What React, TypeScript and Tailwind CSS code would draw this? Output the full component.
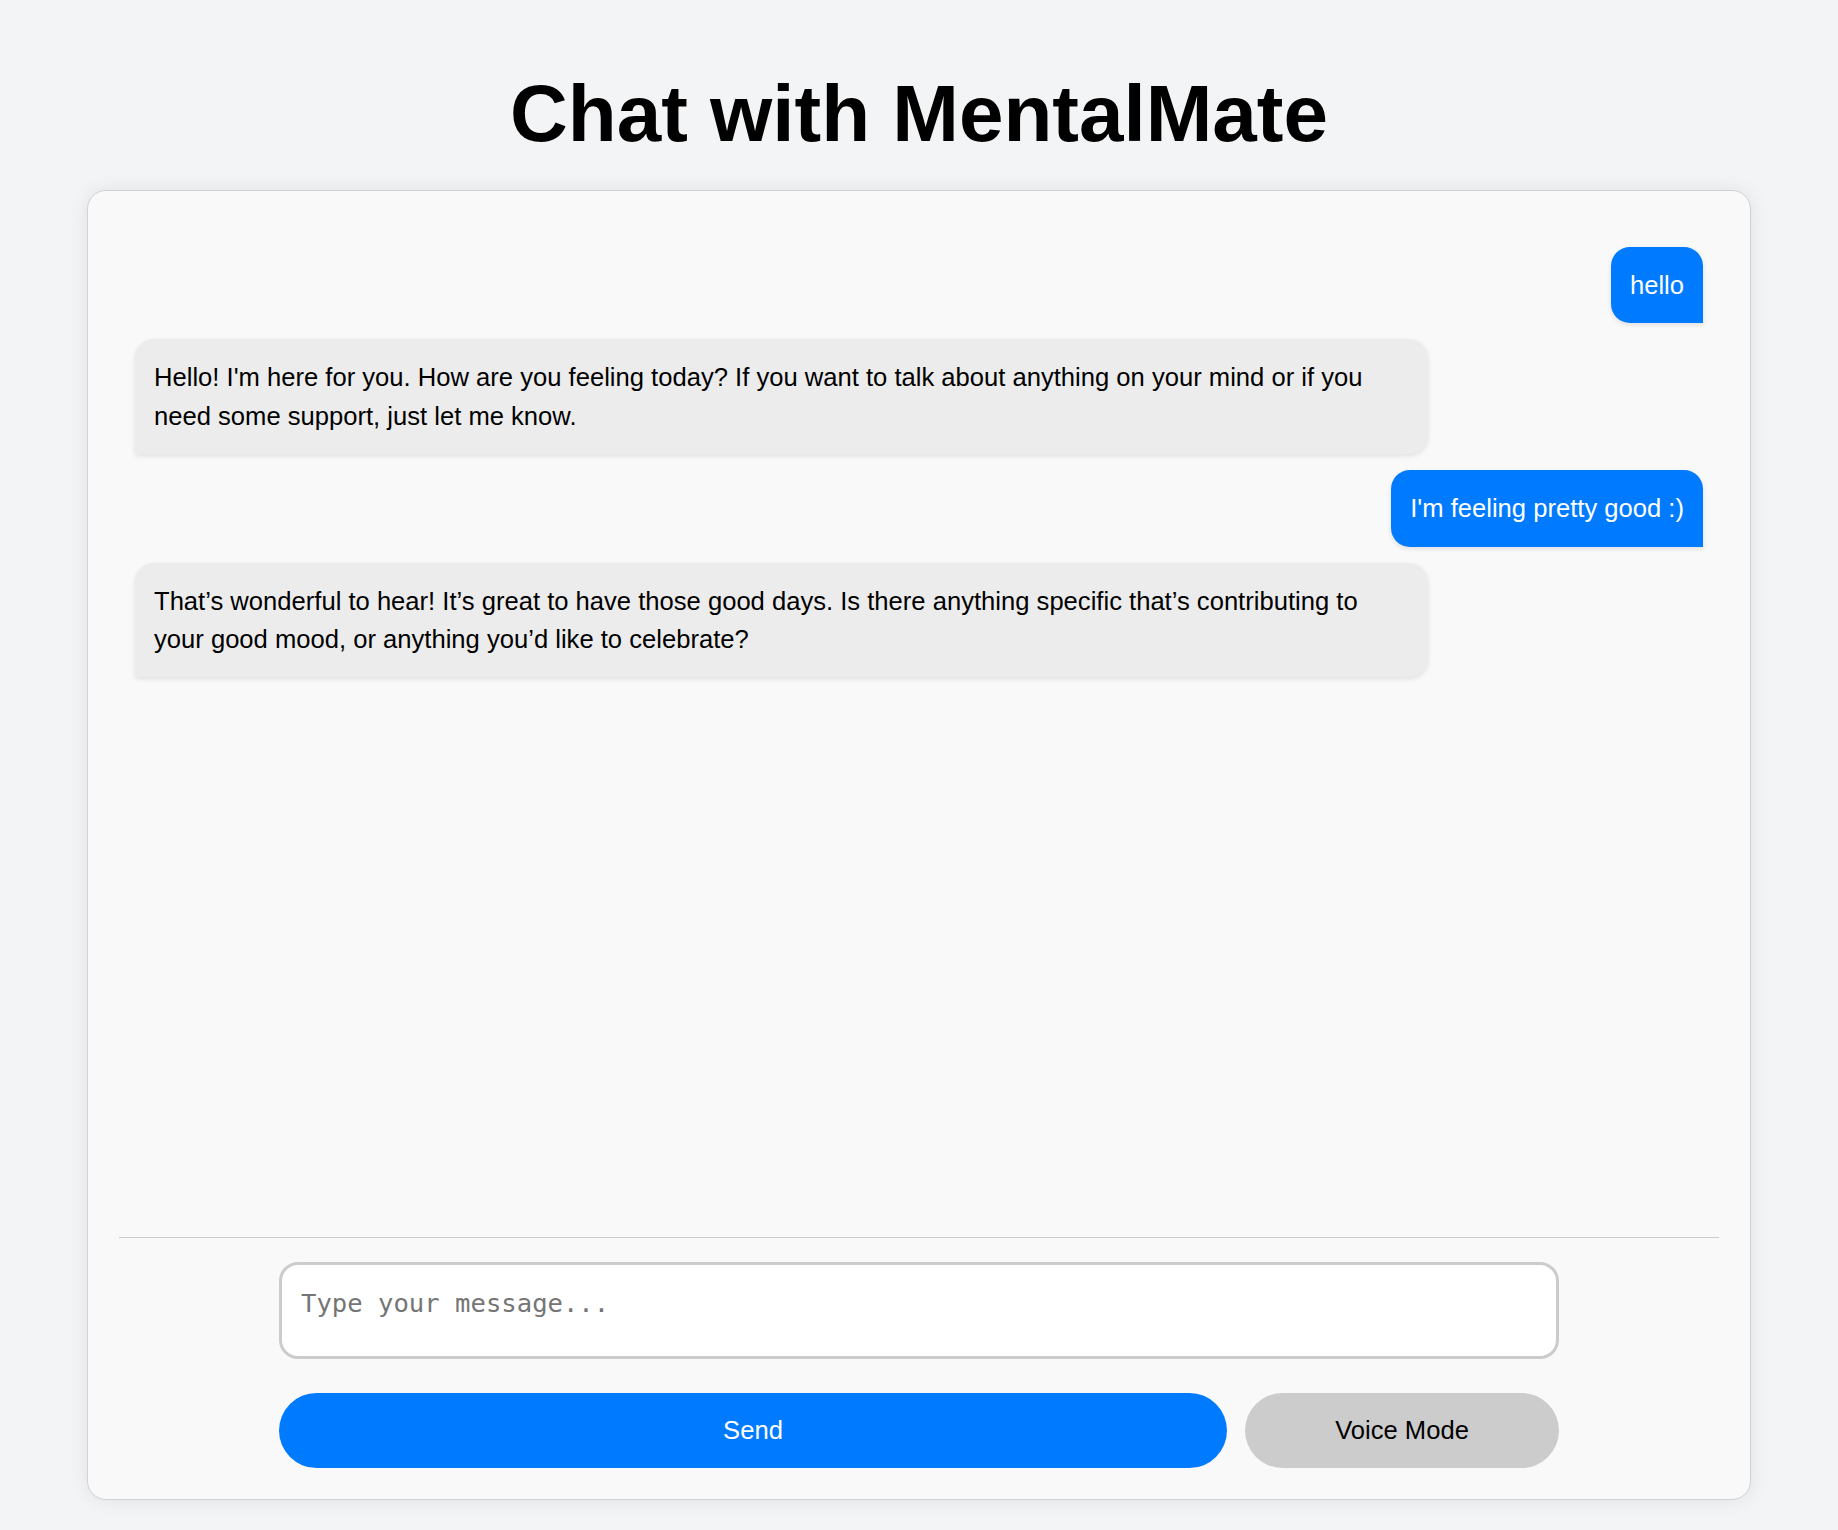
import React from "react";

type Message = { from: "user" | "bot"; text: string };

const messages: Message[] = [
  { from: "user", text: "hello" },
  {
    from: "bot",
    text: "Hello! I'm here for you. How are you feeling today? If you want to talk about anything on your mind or if you need some support, just let me know.",
  },
  { from: "user", text: "I'm feeling pretty good :)" },
  {
    from: "bot",
    text: "That’s wonderful to hear! It’s great to have those good days. Is there anything specific that’s contributing to your good mood, or anything you’d like to celebrate?",
  },
];

const Bubble = ({ message }: { message: Message }) => {
  if (message.from === "user") {
    return (
      <div className="flex justify-end">
        <div className="rounded-[19px] rounded-br-none bg-[#007bff] px-[19px] py-[19px] text-[25.6px] leading-[38.4px] text-white shadow-[0_2px_5px_rgba(0,0,0,0.1)]">
          {message.text}
        </div>
      </div>
    );
  }
  return (
    <div className="flex justify-start">
      <div className="max-w-[1293px] rounded-[19px] rounded-bl-none bg-[#ececec] px-[19px] py-[19px] text-[25.6px] leading-[38.4px] text-black shadow-[0_2px_5px_rgba(0,0,0,0.1)]">
        {message.text}
      </div>
    </div>
  );
};

export default function App() {
  return (
    <div className="flex h-screen flex-col items-center bg-[#f3f4f6] font-['Liberation_Sans',Arial,sans-serif]">
      <h1 className="pt-[54px] text-[80px] font-bold leading-normal text-black">
        Chat with MentalMate
      </h1>

      <div className="mt-[16px] mb-[30px] flex w-[1664px] flex-1 flex-col rounded-[19px] border border-[#d2d2d2] bg-[#f9f9f9] p-[31px] shadow-[0_0_20px_rgba(0,0,0,0.08)]">
        <div className="flex flex-1 flex-col gap-[16px] px-[16px] pt-[25px]">
          {messages.map((m, i) => (
            <Bubble key={i} message={m} />
          ))}
        </div>

        <div className="border-t border-[#cccccc] pt-[24px]">
          <div className="mx-auto flex w-full max-w-[1280px] flex-col gap-[34px]">
            <textarea
              placeholder="Type your message..."
              className="box-border h-[97px] w-full resize-none rounded-[19px] border-[3px] border-[#cccccc] bg-white p-[19px] font-['DejaVu_Sans_Mono',monospace] text-[25.6px] text-black outline-none placeholder:text-[#757575]"
            />
            <div className="flex gap-[18px]">
              <button className="h-[75px] flex-1 rounded-full bg-[#007bff] text-[25.6px] text-white">
                Send
              </button>
              <button className="h-[75px] w-[314px] rounded-full bg-[#cccccc] text-[25.6px] text-black">
                Voice Mode
              </button>
            </div>
          </div>
        </div>
      </div>
    </div>
  );
}
